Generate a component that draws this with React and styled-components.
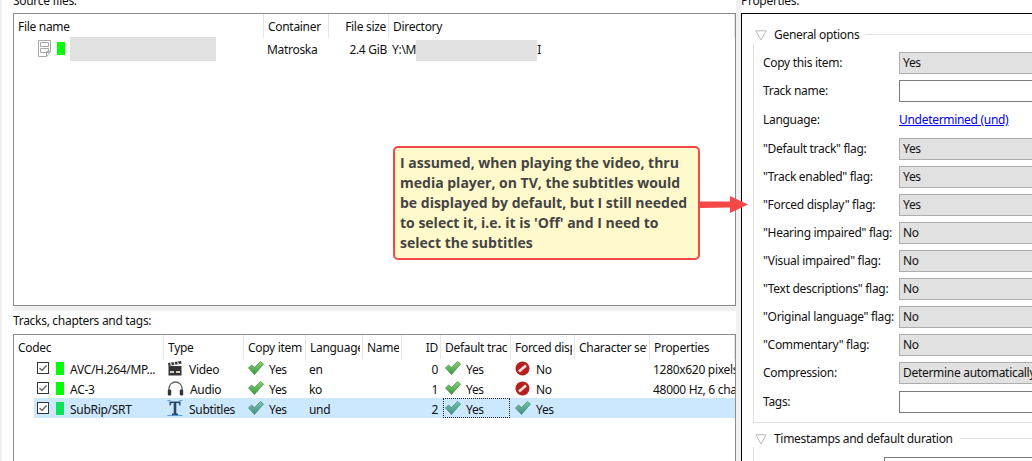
import React from 'react';
import styled, { createGlobalStyle } from 'styled-components';

const GlobalStyle = createGlobalStyle`
  html, body {
    margin: 0;
    padding: 0;
    background: #fff;
  }
  #root {
    width: 1032px;
    height: 461px;
    overflow: hidden;
  }
`;

const Page = styled.div`
  position: relative;
  display: flex;
  width: 1032px;
  height: 461px;
  overflow: hidden;
  background: #f0f0f0;
  color: #111;
  font-family: 'Noto Sans', 'Open Sans', sans-serif;
  font-size: 12px;
  letter-spacing: -0.3px;
  line-height: 16px;
`;

const LeftColumn = styled.div`
  flex: 0 0 734px;
  min-width: 0;
  display: flex;
  flex-direction: column;
  margin-left: 2px;
  background: #fff;
`;

const Pane = styled.div`
  display: flex;
  flex-direction: column;
  flex: ${(p) => (p.$grow ? 1 : 'none')};
  height: ${(p) => p.$height || 'auto'};
  min-height: 0;
  padding-left: 11px;
  background: #fff;
`;

const PaneLabel = styled.div`
  display: flex;
  align-items: flex-end;
  flex: none;
  height: ${(p) => p.$height}px;
  padding-bottom: ${(p) => p.$pad}px;
  box-sizing: border-box;
  white-space: nowrap;
`;

const Gutter = styled.div`
  flex: none;
  height: 5px;
  margin-left: 11px;
  background: #f0f0f0;
`;

const ListBox = styled.div`
  flex: 1;
  min-height: 0;
  border: 1px solid #8c8c8c;
  border-bottom-width: ${(p) => (p.$open ? 0 : 1)}px;
  background: #fff;
  overflow: hidden;
`;

const HeaderRow = styled.div`
  display: grid;
  grid-template-columns: ${(p) => p.$cols};
  height: ${(p) => p.$height}px;
`;

const HeaderCell = styled.div`
  padding-left: 4px;
  border-right: 1px solid #e5e5e5;
  height: 24px;
  line-height: ${(p) => p.$line}px;
  min-width: 0;
`;

const HeaderLabel = styled.div`
  margin-right: 2px;
  overflow: hidden;
  white-space: nowrap;
  text-align: ${(p) => (p.$right ? 'right' : 'left')};
`;

const DataRow = styled.div`
  position: relative;
  display: grid;
  grid-template-columns: ${(p) => p.$cols};
  height: 20px;
  align-items: center;
  margin-left: 20px;
  background: ${(p) => (p.$selected ? '#cce8ff' : 'transparent')};
`;

const Cell = styled.div`
  display: flex;
  align-items: center;
  height: 20px;
  gap: ${(p) => p.$gap || 0}px;
  padding-left: ${(p) => p.$left ?? 3}px;
  padding-right: ${(p) => p.$pad || 0}px;
  justify-content: ${(p) => (p.$right ? 'flex-end' : 'flex-start')};
  white-space: nowrap;
`;

const CellText = styled.span`
  padding-top: 4px;
`;

const Swatch = styled.span`
  flex: none;
  width: 8px;
  height: 13px;
  background: ${(p) => (p.$selected ? '#0de35a' : '#00ff00')};
`;

const Redacted = styled.span`
  flex: none;
  display: block;
  width: ${(p) => p.$width}px;
  height: ${(p) => p.$height}px;
  margin-top: ${(p) => p.$top || 0}px;
  background: #e1e1e1;
`;

const FocusBox = styled.div`
  position: absolute;
  left: 409px;
  top: 0;
  width: 65px;
  height: 18px;
  border: 1px dotted #222;
`;

const RightColumn = styled.div`
  flex: 0 0 296px;
  margin-left: 5px;
  display: flex;
  flex-direction: column;
  background: #fff;
`;

const Frame = styled.div`
  flex: 1;
  border-top: 1px solid #000;
  border-left: 1px solid #000;
  padding: 13px 0 0 11px;
  overflow: hidden;
`;

const SectionHead = styled.div`
  display: flex;
  align-items: center;
  height: 16px;
  margin-top: ${(p) => p.$top || 0}px;
  padding-left: 2px;
`;

const SectionTitle = styled.span`
  margin-left: 7px;
  white-space: nowrap;
`;

const SectionRule = styled.span`
  flex: 1;
  height: 1px;
  margin: 0 0 2px 7px;
  background: #e0e0e0;
`;

const SectionBody = styled.div`
  border-left: 1px solid #e0e0e0;
  border-bottom: ${(p) => (p.$open ? 0 : 1)}px solid #e0e0e0;
  padding: ${(p) => (p.$open ? '10px 0 0 130px' : '6px 0 5px 9px')};
`;

const FormRow = styled.div`
  display: flex;
  align-items: center;
  height: ${(p) => p.$height || 28}px;
`;

const FormLabel = styled.span`
  flex: 0 0 136px;
  white-space: nowrap;
`;

const Combo = styled.div`
  flex: 1;
  height: 22px;
  box-sizing: border-box;
  padding-left: 3px;
  line-height: 19px;
  background: #e1e1e1;
  border: 1px solid #adadad;
  white-space: nowrap;
`;

const TextBox = styled.div`
  flex: 1;
  height: 22px;
  box-sizing: border-box;
  background: #fff;
  border: 1px solid #7a7a7a;
`;

const LangLink = styled.a`
  color: #0000ee;
  text-decoration: underline;
  white-space: nowrap;
`;

const Callout = styled.div`
  position: absolute;
  left: 393px;
  top: 146px;
  width: 307px;
  height: 114px;
  box-sizing: border-box;
  padding: 5px 5px;
  border: 2px solid #f54748;
  border-radius: 5px;
  background: #fff9cb;
  color: #444;
  font-family: 'Open Sans', 'Noto Sans', sans-serif;
  font-size: 14px;
  font-weight: 700;
  letter-spacing: 0;
  line-height: 20px;
`;

const ArrowWrap = styled.svg`
  position: absolute;
  left: 699px;
  top: 194px;
`;

const FileIcon = () => (
  <svg width="15" height="17" viewBox="0 0 15 17" fill="none" stroke="#a8a8a8" strokeWidth="1">
    <path d="M1.5 .5h12v11l-4 5h-8z" />
    <path d="M3.5 2.5h8v4h-8zM3.5 8.5h8v4h-8z" />
    <path d="M13.5 11.5h-4v5" />
  </svg>
);

const CheckBox = () => (
  <svg width="14" height="14" viewBox="0 0 14 14" fill="none">
    <rect x="1.5" y="1.5" width="11" height="11" fill="#fff" stroke="#333" />
    <path d="M3.5 7l2.5 2.5 4.5-5" stroke="#666" strokeWidth="1.4" />
  </svg>
);

const Tick = ({ selected }) => (
  <svg width="16" height="14" viewBox="0 0 16 14">
    <defs>
      <linearGradient id={selected ? 'tickSel' : 'tickPlain'} x1="0" y1="0" x2="0" y2="1">
        <stop offset="0" stopColor={selected ? '#7cc4ac' : '#8fd07f'} />
        <stop offset="1" stopColor={selected ? '#3f9080' : '#349a38'} />
      </linearGradient>
    </defs>
    <path
      d="M0.5 7L3.5 4 6.5 6.5 12.5 0.5 15.5 3 6.5 13.5z"
      fill={`url(#${selected ? 'tickSel' : 'tickPlain'})`}
      stroke={selected ? '#3d8a78' : '#3c8a3a'}
      strokeWidth="0.7"
    />
  </svg>
);

const NoSign = () => (
  <svg width="15" height="15" viewBox="0 0 15 15">
    <circle cx="7.5" cy="7.5" r="7" fill="#b3211c" />
    <path d="M4 10.5L11 4.5" stroke="#f3dedd" strokeWidth="2.6" />
  </svg>
);

const Clapper = () => (
  <svg width="16" height="15" viewBox="0 0 16 15">
    <path d="M1 2L14 0l.6 2.6L1.5 5z" fill="#333" />
    <path d="M3.5 1.5l1 3M7 1l1 3M10.5 .6l1 3" stroke="#e5e5e5" strokeWidth="1.2" />
    <rect x="1.5" y="5" width="13" height="9.5" fill="#333" />
    <path d="M3 11h4M9 11h4" stroke="#ccc" strokeWidth="2" />
  </svg>
);

const Headphones = () => (
  <svg width="17" height="15" viewBox="0 0 17 15" fill="none">
    <path d="M2 10V7.5a6.5 6.5 0 0 1 13 0V10" stroke="#666" strokeWidth="1.3" />
    <rect x="0.8" y="8.5" width="3.4" height="6" rx="1.2" fill="#333" />
    <rect x="12.8" y="8.5" width="3.4" height="6" rx="1.2" fill="#333" />
  </svg>
);

const TextIcon = () => (
  <svg width="16" height="16" viewBox="0 0 16 16">
    <path d="M2.5 1.5h11v4h-1L11.5 3H9.3v10.5h1.7v1.5H5v-1.5h1.7V3H4.5L3.5 5.5h-1z" fill="#24486e" />
    <path d="M0.5 .5h3M12.5 .5h3M0.5 15.5h15" stroke="#5c9bd6" strokeWidth="1" />
  </svg>
);

const TriangleIcon = () => (
  <svg width="12" height="11" viewBox="0 0 12 11" fill="#fff" stroke="#b8b8b8">
    <path d="M0.8 .8h10.4L6 10z" />
  </svg>
);

const SOURCE_COLS = '250px 65px 60px 1fr';
const TRACK_COLS = '150px 80px 62px 57px 39px 39px 70px 64px 75px 1fr';
const TRACK_ROW_COLS = '130px 80px 62px 57px 39px 39px 70px 64px 75px 1fr';

const sourceHeaders = [
  { name: 'File name' },
  { name: 'Container' },
  { name: 'File size', right: true },
  { name: 'Directory' },
];

const trackHeaders = [
  { name: 'Codec' },
  { name: 'Type' },
  { name: 'Copy item' },
  { name: 'Language' },
  { name: 'Name' },
  { name: 'ID', right: true },
  { name: 'Default track' },
  { name: 'Forced display' },
  { name: 'Character set' },
  { name: 'Properties' },
];

const tracks = [
  { codec: 'AVC/H.264/MP...', Icon: Clapper, type: 'Video', lang: 'en', id: 0, forced: false, props: '1280x620 pixels' },
  { codec: 'AC-3', Icon: Headphones, type: 'Audio', lang: 'ko', id: 1, forced: false, props: '48000 Hz, 6 channels' },
  { codec: 'SubRip/SRT', Icon: TextIcon, type: 'Subtitles', lang: 'und', id: 2, forced: true, props: '', selected: true },
];

const options = [
  { label: 'Copy this item:', kind: 'combo', value: 'Yes' },
  { label: 'Track name:', kind: 'text' },
  { label: 'Language:', kind: 'link', value: 'Undetermined (und)', height: 30 },
  { label: '"Default track" flag:', kind: 'combo', value: 'Yes' },
  { label: '"Track enabled" flag:', kind: 'combo', value: 'Yes' },
  { label: '"Forced display" flag:', kind: 'combo', value: 'Yes' },
  { label: '"Hearing impaired" flag:', kind: 'combo', value: 'No' },
  { label: '"Visual impaired" flag:', kind: 'combo', value: 'No' },
  { label: '"Text descriptions" flag:', kind: 'combo', value: 'No' },
  { label: '"Original language" flag:', kind: 'combo', value: 'No' },
  { label: '"Commentary" flag:', kind: 'combo', value: 'No' },
  { label: 'Compression:', kind: 'combo', value: 'Determine automatically' },
  { label: 'Tags:', kind: 'text', height: 30 },
];

function OptionControl({ kind, value }) {
  if (kind === 'text') return <TextBox />;
  if (kind === 'link') return <LangLink href="#">{value}</LangLink>;
  return <Combo>{value}</Combo>;
}

function TrackRow({ track }) {
  const { codec, Icon, type, lang, id, forced, props, selected } = track;
  return (
    <DataRow $cols={TRACK_ROW_COLS} $selected={selected}>
      <Cell $left={2} $gap={6}>
        <CheckBox />
        <Swatch $selected={selected} />
        <CellText>{codec}</CellText>
      </Cell>
      <Cell $left={3} $gap={6}>
        <Icon />
        <CellText>{type}</CellText>
      </Cell>
      <Cell $left={4} $gap={5}>
        <Tick selected={selected} />
        <CellText>Yes</CellText>
      </Cell>
      <Cell><CellText>{lang}</CellText></Cell>
      <Cell />
      <Cell $right $pad={3}><CellText>{id}</CellText></Cell>
      <Cell $left={4} $gap={5}>
        <Tick selected={selected} />
        <CellText>Yes</CellText>
      </Cell>
      <Cell $left={4} $gap={forced ? 5 : 6}>
        {forced ? <Tick selected={selected} /> : <NoSign />}
        <CellText>{forced ? 'Yes' : 'No'}</CellText>
      </Cell>
      <Cell />
      <Cell><CellText>{props}</CellText></Cell>
      {selected && <FocusBox />}
    </DataRow>
  );
}

export default function App() {
  return (
    <Page>
      <GlobalStyle />
      <LeftColumn>
        <Pane $height="306px">
          <PaneLabel $height={13} $pad={4}>Source files:</PaneLabel>
          <ListBox>
            <HeaderRow $cols={SOURCE_COLS} $height={24}>
              {sourceHeaders.map((h) => (
                <HeaderCell key={h.name} $line={26}>
                  <HeaderLabel $right={h.right}>{h.name}</HeaderLabel>
                </HeaderCell>
              ))}
            </HeaderRow>
            <DataRow $cols="230px 65px 60px 1fr">
              <Cell $left={3} $gap={5}>
                <FileIcon />
                <Swatch />
                <Redacted $width={146} $height={24} $top={2} />
              </Cell>
              <Cell><CellText>Matroska</CellText></Cell>
              <Cell $right $pad={2}><CellText>2.4 GiB</CellText></Cell>
              <Cell>
                <CellText>Y:\M</CellText>
                <Redacted $width={121} $height={21} $top={5} />
                <CellText>I</CellText>
              </Cell>
            </DataRow>
          </ListBox>
        </Pane>
        <Gutter />
        <Pane $grow>
          <PaneLabel $height={23} $pad={5}>Tracks, chapters and tags:</PaneLabel>
          <ListBox $open>
            <HeaderRow $cols={TRACK_COLS} $height={23}>
              {trackHeaders.map((h) => (
                <HeaderCell key={h.name} $line={25}>
                  <HeaderLabel $right={h.right}>{h.name}</HeaderLabel>
                </HeaderCell>
              ))}
            </HeaderRow>
            {tracks.map((t) => (
              <TrackRow key={t.id} track={t} />
            ))}
          </ListBox>
        </Pane>
      </LeftColumn>
      <RightColumn>
        <PaneLabel $height={13} $pad={4}>Properties:</PaneLabel>
        <Frame>
          <SectionHead>
            <TriangleIcon />
            <SectionTitle>General options</SectionTitle>
            <SectionRule />
          </SectionHead>
          <SectionBody>
            {options.map((o) => (
              <FormRow key={o.label} $height={o.height}>
                <FormLabel>{o.label}</FormLabel>
                <OptionControl kind={o.kind} value={o.value} />
              </FormRow>
            ))}
          </SectionBody>
          <SectionHead $top={8}>
            <TriangleIcon />
            <SectionTitle>Timestamps and default duration</SectionTitle>
            <SectionRule />
          </SectionHead>
          <SectionBody $open>
            <TextBox />
          </SectionBody>
        </Frame>
      </RightColumn>
      <Callout>
        I assumed, when playing the video, thru media player, on TV, the subtitles would be displayed by default, but I still needed to select it, i.e. it is 'Off' and I need to select the subtitles
      </Callout>
      <ArrowWrap width="50" height="22" viewBox="0 0 50 22">
        <path d="M0 7.5L31 7.5V2L49 10.5L31 19V13.5L0 14z" fill="#f54748" />
      </ArrowWrap>
    </Page>
  );
}
